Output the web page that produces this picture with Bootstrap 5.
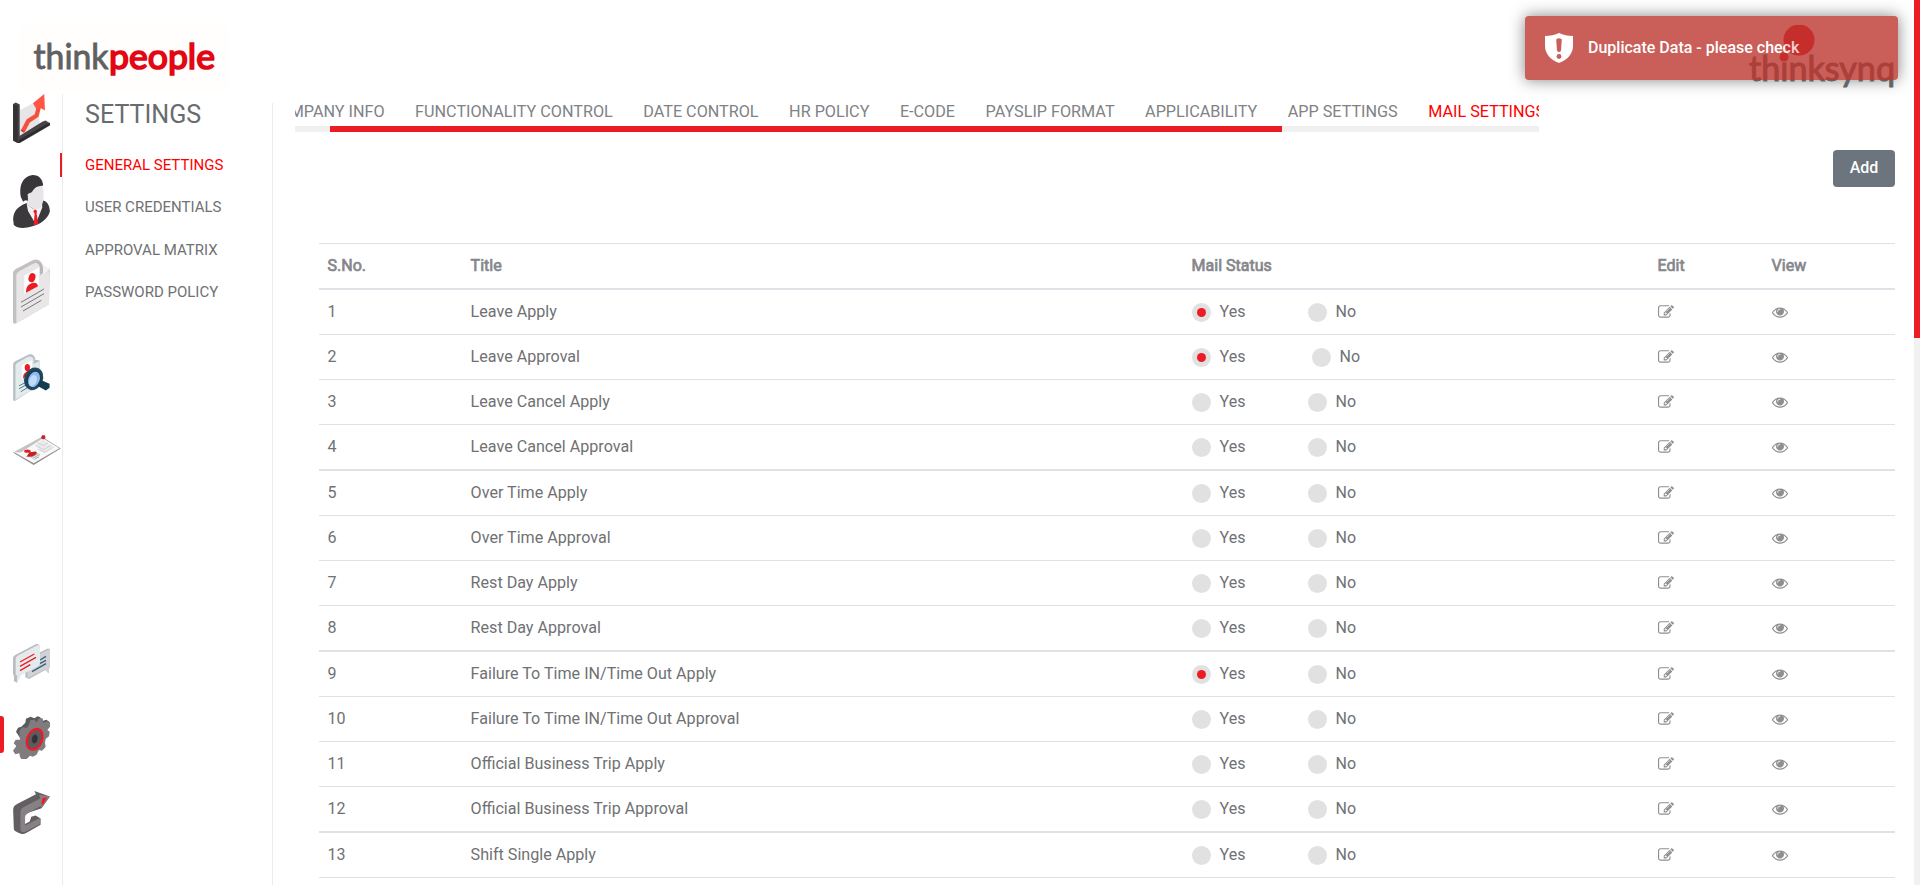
<!DOCTYPE html>
<html lang="en">
<head>
<meta charset="utf-8">
<title>thinkpeople - Mail Settings</title>
<link href="https://cdn.jsdelivr.net/npm/bootstrap@5.3.0/dist/css/bootstrap.min.css" rel="stylesheet">
<style>
body{font-family:Roboto,"Liberation Sans",sans-serif;font-size:16px;line-height:24px;color:#6f7173;background:#fff;height:885px;overflow:hidden}
svg{display:block;flex:none}
.topbar{height:94px;padding:25px 19px 0 19px}
.brand-box{background:#fffefc;width:210px;height:65px}
.shell{height:791px}
.rail{width:63px;border-right:1px solid #ececec;padding-left:13px}
.rail a{display:block}
.rail-on{position:relative}
.rail-on::before{content:"";position:absolute;left:-13px;top:0;width:4px;height:37px;background:#ed1c24;border-radius:0 3px 3px 0}
.submenu{width:210px;margin-top:9px;border-right:1px solid #ececec}
.submenu h1{font-size:25.1px;line-height:30px;font-weight:400;margin:-3px 0 0 22px;color:#686c6f}
.submenu a{display:block;font-size:15px;line-height:24px;padding-left:22px;margin-bottom:18.7px;color:#6f7173;text-decoration:none;position:relative}
.submenu a.on{color:#f00;margin-bottom:18px}
.submenu a.on::before{content:"";position:absolute;left:-3px;top:0;width:2px;height:24px;background:#ed1c24}
.work{padding-left:22px}
.tabstrip{width:1244px;height:38px;overflow:hidden}
.tabstrip nav{height:32px;padding-top:6px;margin-left:-27px;white-space:nowrap;gap:30.5px;font-size:16.2px}
.tabstrip nav span{color:#808285;flex:none}
.tabstrip nav span.on{color:#f00}
.track{height:6px;background:#f0f0f0}
.thumb{height:6px;width:952px;margin-left:35px;background:#ed1c24}
.btn-add{width:62px;height:37px;background:#6c757d;color:#fff;font-weight:500;border-radius:4px;padding:5px 0 8px;line-height:24px;margin:18px 25px 0 0}
.grid-table{margin:56px 0 0 24px;width:1576px;table-layout:fixed;border-collapse:separate;border-spacing:0;border-top:1px solid #dee2e6}
.grid-table th,.grid-table td{padding:0 9px 0 8.6px;height:45px;border-bottom:1px solid #dee2e6;line-height:24px;vertical-align:middle}
.grid-table td:nth-child(2){font-size:16.12px}
.grid-table th{height:46px;border-bottom:2px solid #dee2e6;text-align:left;font-weight:400;-webkit-text-stroke:.7px #85878a;color:#85878a}
.grid-table tbody tr:nth-child(4n) td{height:46px;border-bottom-width:2px}
.dot{width:19px;height:19px;border-radius:50%;background:#e1e1e1;display:flex;align-items:center;justify-content:center;margin-right:9px}
.dot.sel::after{content:"";width:9px;height:9px;border-radius:50%;background:#ed1c24}
.opt{width:116px;display:flex;align-items:center}
tr.wide .opt{width:120px}
.ico{fill:#8f8f8f;margin-bottom:1px}
.scroll{position:absolute;right:0;top:0;width:6px;height:885px;background:#f1f1f1}
.scroll div{height:338px;background:#ed1c24}
.notice{position:absolute;left:1525px;top:16px;width:373px;height:64px;border-radius:4px;background:#bd362f;opacity:.8;box-shadow:0 0 15px #666;color:#fff;font-weight:500;padding-left:20px}
.logo-text{font-family:Lato,sans-serif}
</style>
</head>
<body class="position-relative">
<header class="topbar d-flex justify-content-between">
  <div class="brand-box">
    <svg width="210" height="65" viewBox="19 25 210 65"><text class="logo-text" x="33.500" y="68.500" font-size="34.500" textLength="75" lengthAdjust="spacingAndGlyphs" fill="#5f6062" stroke="#5f6062" stroke-width=".9">think</text><text class="logo-text" x="109" y="68.500" font-size="35.500" textLength="106" lengthAdjust="spacingAndGlyphs" fill="#e30613" stroke="#e30613" stroke-width="1.700">people</text></svg>
  </div>
  <svg width="155" height="69" viewBox="1746 25 155 69"><text class="logo-text" x="1749" y="81" font-size="35" stroke="#636466" stroke-width="1" textLength="146" lengthAdjust="spacingAndGlyphs" fill="#636466">thinksynq</text><circle cx="1799" cy="40" r="15.500" fill="#e8101c"/><circle cx="1784" cy="57" r="4.500" fill="#e8101c"/></svg>
</header>
<div class="shell d-flex">
  <aside class="rail flex-shrink-0">
    <a style="margin-bottom:32px"><svg width="37" height="49" viewBox="39 222 111 148"><path d="M60 270L118 240V318L60 346Z" fill="#e7e5e7"/><path d="M39 252l8-4 12 6v94l68-42 10-4 13 8v7l-94 55-17-9Z" fill="#464347"/><path d="M39 252l14 7v111l-14-8Z" fill="#343135"/><path d="M56 361l94-53v7l-94 55Z" fill="#2d2a2f"/><path d="M68 335l17-32 25-16 7-27" fill="none" stroke="#f5503c" stroke-width="13" stroke-linejoin="round"/><path d="M99 250l34-28 2 50-12-7-14 2Z" fill="#ff5542"/><path d="M63 331l9 6" fill="none" stroke="#d93b2c" stroke-width="4"/></svg></a>
    <a style="margin-bottom:31px"><svg width="37" height="53" viewBox="39 464 111 160"><path d="M39 597c2-27 14-36 37-47l50-10c17 3 23 15 24 34-8 27-33 39-53 45-25 8-46 6-56-4Z" fill="#3c393d"/><path d="M80 552l20 15 26-26 1 21-20 50-23-39Z" fill="#f2f0f2"/><path d="M104 567l7 5-1 9 5 30-11 5-3-1 3-34-4-7Z" fill="#ed1c24"/><path d="M80 525c15-13 27-31 45-34l5 15 1 30c-2 15-7 20-8 26l-19 7-23-15Z" fill="#e7e5e7"/><path d="M62 530c-5-32 3-60 35-66 23 0 31 15 33 32-28 2-28 13-35 20l-12 5 1 21-8-2-7 5Z" fill="#393639"/></svg></a>
    <a style="margin-bottom:30px"><svg width="37" height="65" viewBox="39 56 111 193"><path d="M39 99c0-7 3-12 10-15l49-25c15-7 29 4 30 20l21 5-2 107-98 57c-5 2-10 0-10-4Z" fill="#c3c0c2"/><path d="M49 105c0-6 4-10 10-14l39-21c15-7 24 0 24 14v20l25-12v99l-98 57Z" fill="#e9e6e8"/><path d="M124 68l26 19-25 18Z" fill="#f3f1f2"/><path d="M120 84c0-9-4-16-12-18 11-4 21 2 21 17v15l-9 4Z" fill="#bab7b9"/><path d="M73 105l44-25v54l-44 25Z" fill="#fff"/><ellipse cx="96" cy="111" rx="10" ry="14" transform="rotate(18 96 111)" fill="#ed1c24"/><path d="M78 156c0-16 5-23 16-28 9-4 19-2 20 9Z" fill="#ed1c24"/><path d="M63 185l69-40M63 199l69-40M69 211l55-32" stroke="#77757a" stroke-width="3"/></svg></a>
    <a style="margin-bottom:34px"><svg width="37" height="47" viewBox="39 341 111 142"><path d="M39 373c0-5 3-8 8-11l38-19c11-4 20 3 21 15l13 3v74l-74 47c-4 2-6-1-6-4Z" fill="#b6c0c3"/><path d="M46 377c0-5 3-7 7-10l30-17c11-5 18 1 18 11v10l18-9v73l-73 44Z" fill="#e4ebed"/><path d="M65 376l31-17v40l-31 18Z" fill="#fff"/><ellipse cx="82" cy="382" rx="8" ry="11" fill="#ed1c24"/><path d="M69 415c0-14 4-18 15-23l10 9Z" fill="#ed1c24"/><path d="M57 437l18-9M57 446l20-11M62 455l20-12" stroke="#4f8292" stroke-width="3"/><ellipse cx="101" cy="416" rx="25" ry="32" transform="rotate(22 101 416)" fill="#183f55" stroke="#25495c" stroke-width="6"/><path d="M119 418l30 13v12l-11 8-25-13Z" fill="#153b4e"/><ellipse cx="102" cy="418" rx="17" ry="24" transform="rotate(22 102 418)" fill="#8dbaf0"/><ellipse cx="99" cy="421" rx="11" ry="17" transform="rotate(22 99 421)" fill="#c1dcf8"/></svg></a>
    <a style="margin-bottom:179px"><svg width="48" height="30" viewBox="39 585 144 91"><path d="M39 639l88-48 56 35-82 50Z" fill="#8e8e8e"/><path d="M42 637l85-44 52 32-78 46Z" fill="#f8f8f8"/><path d="M44 635l81-44 4 4-66 42-12 1Z" fill="#c4c4c4"/><path d="M105 616l24-17 30 22-26 20Z" fill="#ebebeb"/><path d="M112 608l18 9 14-9M107 617l23 12 25-13M113 628l22 9 26-15" fill="none" stroke="#d0d0d0" stroke-width="3"/><path d="M126 586h9l2 9-7 4-7-4Z" fill="#c22631"/><ellipse cx="82" cy="634" rx="10" ry="5" fill="#e0202b"/><path d="M79 651l9-14 20-2c7 6-4 12-14 16Z" fill="#c41e28"/><path d="M92 653l23-12M97 656l23-12M103 659l14-8" stroke="#777" stroke-width="2"/></svg></a>
    <a style="margin-bottom:32px"><svg width="37" height="40" viewBox="39 42 111 120"><path d="M76 90l65-34 9 0v55l-4 5v14l-10-10-49 27-11-5Z" fill="#bcbdc1"/><path d="M83 92l67-36v56l-5 4v14l-9-12-53 26Z" fill="#d1d2d5"/><path d="M96 125l42-24M119 101l19-10M120 90l18-11" stroke="#35617d" stroke-width="4"/><path d="M39 86c0-5 2-8 7-11l58-31c8-4 13-2 15 5l-2 55-65 36v18l-10-4v-17l-3-4Z" fill="#b9bcc0"/><path d="M47 88c0-6 3-9 8-12l54-29c7-3 11 0 11 6v43c0 7-3 11-9 14l-48 26-10 21V138l-6-4Z" fill="#e4ebed"/><path d="M60 96l43-24M60 109l48-27M60 122l31-18" stroke="#ed1c24" stroke-width="4"/></svg></a>
    <a class="rail-on" style="margin-bottom:32px"><svg width="37" height="43" viewBox="39 258 111 129"><path d="M48 305l6-12 10-3 12-12 2-12 14-6 11 5 10-6 8 3 4 12 14-5 9 6-60 90Z" fill="#5d5a5d"/><path d="M58 303l9-11 14 2 7-13 3-10 12-2 7 8 7-12 11 0 2 13 11-4 9 3 0 13-8 10 7 5-2 14-10 8-2 11 2 13-11 11-9-2-8 15-11 5-8-3-10 10-13 4-7-10-2-11-12 3-7-11 10-14-8-8 6-11 13 0Z" fill="#7f7b7e"/><ellipse cx="104" cy="328" rx="22" ry="32" transform="rotate(22 104 328)" fill="#5e5a5d" stroke="#ed1c24" stroke-width="7"/><path d="M98 318l9-5 6 8-2 14-9 6-7-8Z" fill="#343236"/></svg></a>
    <a><svg width="37" height="43" viewBox="39 482 111 130"><path d="M39 540c0-10 3-14 12-19l57-29-5-10 47 17-25 35-40 14-16 10v27l20-11 5-14 13-4 15 9v19l-45 26c-9 4-14 1-21-1l-11-6c-3-2-4-5-4-9Z" fill="#625e62"/><path d="M61 546c0-7 3-11 9-15l52-27-5-11 33 6-25 35-3-7-39 22c-6 4-8 8-8 14v23l45-22v18l-45 24c-9 3-14-2-14-9Z" fill="#858184"/><path d="M128 503l14-1-14 22-4-3Z" fill="#ed1c24"/></svg></a>
  </aside>
  <aside class="submenu flex-shrink-0">
    <h1>SETTINGS</h1>
    <div style="margin-top:23px"><a class="on">GENERAL SETTINGS</a><a>USER CREDENTIALS</a><a>APPROVAL MATRIX</a><a>PASSWORD POLICY</a></div>
  </aside>
  <main class="work flex-grow-1">
    <div class="tabstrip"><nav class="d-flex"><span>COMPANY INFO</span><span>FUNCTIONALITY CONTROL</span><span>DATE CONTROL</span><span>HR POLICY</span><span>E-CODE</span><span>PAYSLIP FORMAT</span><span>APPLICABILITY</span><span>APP SETTINGS</span><span class="on">MAIL SETTINGS</span></nav><div class="track"><div class="thumb"></div></div></div>
    <div class="d-flex justify-content-end"><button class="btn btn-add">Add</button></div>
    <table class="grid-table">
      <colgroup><col style="width:143px"><col style="width:721px"><col style="width:466px"><col style="width:114px"><col style="width:132px"></colgroup>
      <thead><tr><th>S.No.</th><th>Title</th><th>Mail Status</th><th>Edit</th><th>View</th></tr></thead>
      <tbody id="rows"></tbody>
    </table>
  </main>
</div>
<div class="scroll"><div></div></div>
<div class="notice d-flex align-items-center">
  <svg width="28" height="30" viewBox="0 0 28 30" style="margin-right:15px"><path d="M14 0C10 2 5 3 0 3v10c0 8 6 14 14 17 8-3 14-9 14-17V3C23 3 18 2 14 0Z" fill="#fff"/><path d="M11.200 6.500Q14 4 16.800 6.500L16 17.500Q14 20.500 12 17.500Z" fill="#bd362f"/><circle cx="14" cy="23.500" r="2.400" fill="#bd362f"/></svg>
  <span>Duplicate Data - please check</span>
</div>
<script src="https://cdn.jsdelivr.net/npm/bootstrap@5.3.0/dist/js/bootstrap.bundle.min.js"></script>
<script>
const titles=["Leave Apply","Leave Approval","Leave Cancel Apply","Leave Cancel Approval","Over Time Apply","Over Time Approval","Rest Day Apply","Rest Day Approval","Failure To Time IN/Time Out Apply","Failure To Time IN/Time Out Approval","Official Business Trip Apply","Official Business Trip Approval","Shift Single Apply"];
const enabled=[1,2,9];
const edit='<svg class="ico" width="16" height="16" viewBox="0 0 1792 1792"><path d="M888 1184l116-116-152-152-116 116v56h96v96h56zm440-720q-16-16-33 1l-350 350q-17 17-1 33t33-1l350-350q17-17 1-33zm80 594v190q0 119-84.500 203.500t-203.500 84.500h-832q-119 0-203.500-84.500t-84.500-203.500v-832q0-119 84.500-203.500t203.500-84.500h832q63 0 117 25 15 7 18 23 3 17-9 29l-49 49q-14 14-32 8-23-6-45-6h-832q-66 0-113 47t-47 113v832q0 66 47 113t113 47h832q66 0 113-47t47-113v-126q0-13 9-22l64-64q15-15 35-7t20 29zm-96-738l288 288-672 672h-288v-288zm444 132l-92 92-288-288 92-92q28-28 68-28t68 28l152 152q28 28 28 68t-28 68z"/></svg>';
const view='<svg class="ico" width="16" height="16" viewBox="0 0 1792 1792"><path d="M1664 960q-152-236-381-353 61 104 61 225 0 185-131.500 316.500t-316.500 131.500-316.500-131.500-131.500-316.500q0-121 61-225-229 117-381 353 133 205 333.500 326.500t434.500 121.500 434.500-121.500 333.500-326.500zm-720-384q0-20-14-34t-34-14q-125 0-214.500 89.500t-89.500 214.500q0 20 14 34t34 14 34-14 14-34q0-86 61-147t147-61q20 0 34-14t14-34zm848 384q0 34-20 69-140 230-376.500 368.500t-499.500 138.500-499.500-139-376.500-368q-20-35-20-69t20-69q140-229 376.500-368t499.500-139 499.500 139 376.500 368q20 35 20 69z"/></svg>';
document.getElementById('rows').innerHTML=titles.map((t,i)=>`<tr class="${i===1?'wide':''}"><td>${i+1}</td><td>${t}</td><td><div class="d-flex"><div class="opt"><span class="dot ${enabled.includes(i+1)?'sel':''}"></span>Yes</div><div class="opt"><span class="dot"></span>No</div></div></td><td>${edit}</td><td>${view}</td></tr>`).join('');
</script>
</body>
</html>
